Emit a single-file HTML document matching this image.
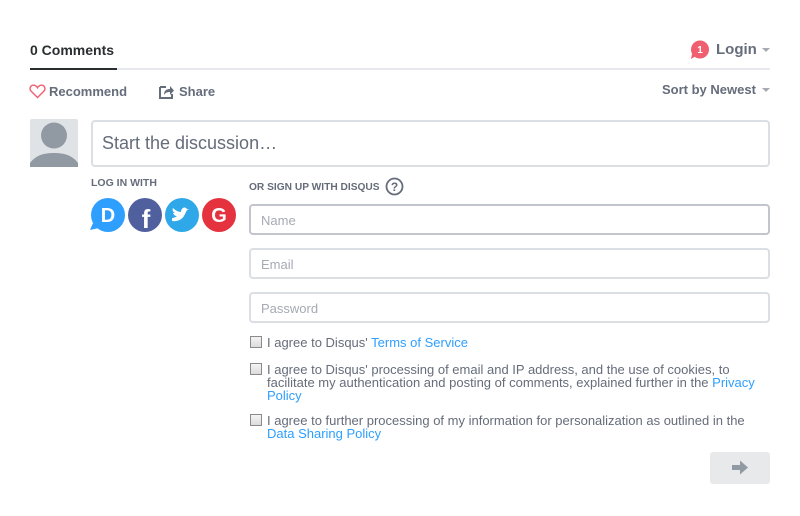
<!DOCTYPE html>
<html><head><meta charset="utf-8"><style>
*{margin:0;padding:0;box-sizing:border-box}
body{width:800px;height:516px;background:#fff;font-family:"Liberation Sans",Arial,sans-serif;color:#656c7a;position:relative;overflow:hidden}
.a{position:absolute;white-space:nowrap}
.inp{position:absolute;left:249px;width:521px;height:31px;border:2px solid #dbdfe4;border-radius:4px;font-size:13px;color:#a5aab3;padding:7px 0 0 10px}
.cb{position:absolute;left:250px;width:12px;height:12px;border:1px solid #8a8a8a;background:linear-gradient(#f4f4f4,#dcdcdc)}
.t{position:absolute;left:267px;font-size:13px;line-height:13px;color:#656c7a;width:500px}
a{color:#2e9fff;text-decoration:none}
</style></head><body>
<div class="a" style="left:30px;top:42px;font-size:14px;font-weight:bold;color:#2a2e2e">0 Comments</div>
<div class="a" style="left:30px;top:68px;width:740px;height:2px;background:#e7e9ee"></div>
<div class="a" style="left:30px;top:68px;width:87px;height:2px;background:#2a2e2e"></div>
<svg class="a" style="left:690px;top:40px" width="20" height="20"><circle cx="10" cy="9.5" r="9" fill="#f05f70"/><path d="M2 14 L1 19 L6 16z" fill="#f05f70"/><text x="10" y="13" font-size="10" font-weight="bold" fill="#fff" text-anchor="middle" font-family="Liberation Sans">1</text></svg>
<div class="a" style="left:716px;top:41px;font-size:15px;font-weight:bold">Login</div>
<div class="a" style="left:762px;top:48px;border:4px solid transparent;border-top:4px solid #a5aab3"></div>
<svg class="a" style="left:29px;top:84px" width="17" height="15"><path d="M8.5 13.5 L2.2 7.3 C0 5 1.2 1.2 4.5 1.2 C6.5 1.2 7.8 2.6 8.5 3.8 C9.2 2.6 10.5 1.2 12.5 1.2 C15.8 1.2 17 5 14.8 7.3 Z" fill="none" stroke="#f05f70" stroke-width="1.4"/></svg>
<div class="a" style="left:49px;top:84px;font-size:13px;font-weight:bold">Recommend</div>
<svg class="a" style="left:159px;top:84px" width="16" height="15"><path d="M1 3 H7 M1 3 V14 H13 V10" fill="none" stroke="#656c7a" stroke-width="2"/><path d="M5 11 C5 6 8 5 11 5 V2 L15 6.5 L11 11 V8 C8 8 6 9 5 11z" fill="#656c7a"/></svg>
<div class="a" style="left:179px;top:84px;font-size:13px;font-weight:bold">Share</div>
<div class="a" style="left:662px;top:82px;font-size:13px;font-weight:bold">Sort by Newest</div>
<div class="a" style="left:762px;top:88px;border:4px solid transparent;border-top:4px solid #a5aab3"></div>
<svg class="a" style="left:30px;top:119px" width="48" height="48"><rect width="48" height="48" rx="2" fill="#dfe3e6"/><circle cx="24" cy="16.5" r="13" fill="#919aa3"/><path d="M0 48 V44 C6 36 14 34 24 34 C34 34 42 36 48 44 V48z" fill="#919aa3"/></svg>
<div class="a" style="left:91px;top:120px;width:679px;height:47px;border:2px solid #dbdfe4;border-radius:4px"></div>
<div class="a" style="left:102px;top:133px;font-size:18px">Start the discussion…</div>
<div class="a" style="left:91px;top:177px;font-size:10.5px;font-weight:bold">LOG IN WITH</div>
<svg class="a" style="left:89px;top:197px" width="150" height="38">
<circle cx="19" cy="18" r="17" fill="#2e9fff"/><path d="M4 26 L1 33 L10 31z" fill="#2e9fff"/><text x="19" y="25" font-size="20" font-weight="bold" fill="#fff" text-anchor="middle" font-family="Liberation Sans">D</text>
<circle cx="56" cy="18" r="17" fill="#50609f"/><text x="57" y="31" font-size="26" font-weight="bold" fill="#fff" text-anchor="middle" font-family="Liberation Sans">f</text>
<circle cx="93" cy="18" r="17" fill="#2ea8e8"/><path d="M83 24 C89 25 94 22 96 17 L98 13 L100 12 L98 12 C97 10 94 10 93 12 C92 13 92 14 92 15 C89 15 86 13 84 11 C83 13 84 15 86 16 L84 16 C85 18 86 19 88 19 C87 20 85 21 83 21 Z" fill="#fff"/>
<circle cx="130" cy="18" r="17" fill="#e5323f"/><text x="130" y="25" font-size="20" font-weight="bold" fill="#fff" text-anchor="middle" font-family="Liberation Sans">G</text>
</svg>
<div class="a" style="left:249px;top:182px;font-size:10.2px;font-weight:bold">OR SIGN UP WITH DISQUS</div>
<svg class="a" style="left:385px;top:177px" width="20" height="20"><circle cx="9.5" cy="9.5" r="8" fill="none" stroke="#656c7a" stroke-width="1.8"/><text x="9.5" y="14" font-size="12" font-weight="bold" fill="#656c7a" text-anchor="middle" font-family="Liberation Sans">?</text></svg>
<div class="inp" style="top:204px;border-color:#c2c6cc">Name</div>
<div class="inp" style="top:248px">Email</div>
<div class="inp" style="top:292px">Password</div>
<div class="cb" style="top:336px"></div>
<div class="t" style="top:336px">I agree to Disqus' <a>Terms of Service</a></div>
<div class="cb" style="top:363px"></div>
<div class="t" style="top:363px">I agree to Disqus' processing of email and IP address, and the use of cookies, to facilitate my authentication and posting of comments, explained further in the <a>Privacy Policy</a></div>
<div class="cb" style="top:414px"></div>
<div class="t" style="top:414px">I agree to further processing of my information for personalization as outlined in the <a>Data Sharing Policy</a></div>
<div class="a" style="left:710px;top:452px;width:60px;height:32px;background:#e8e9eb;border-radius:3px"></div>
<svg class="a" style="left:731px;top:459px" width="19" height="17"><path d="M1 6 H9 V1.5 L17 8.5 L9 15.5 V11 H1z" fill="#919aa3"/></svg>
</body></html>
